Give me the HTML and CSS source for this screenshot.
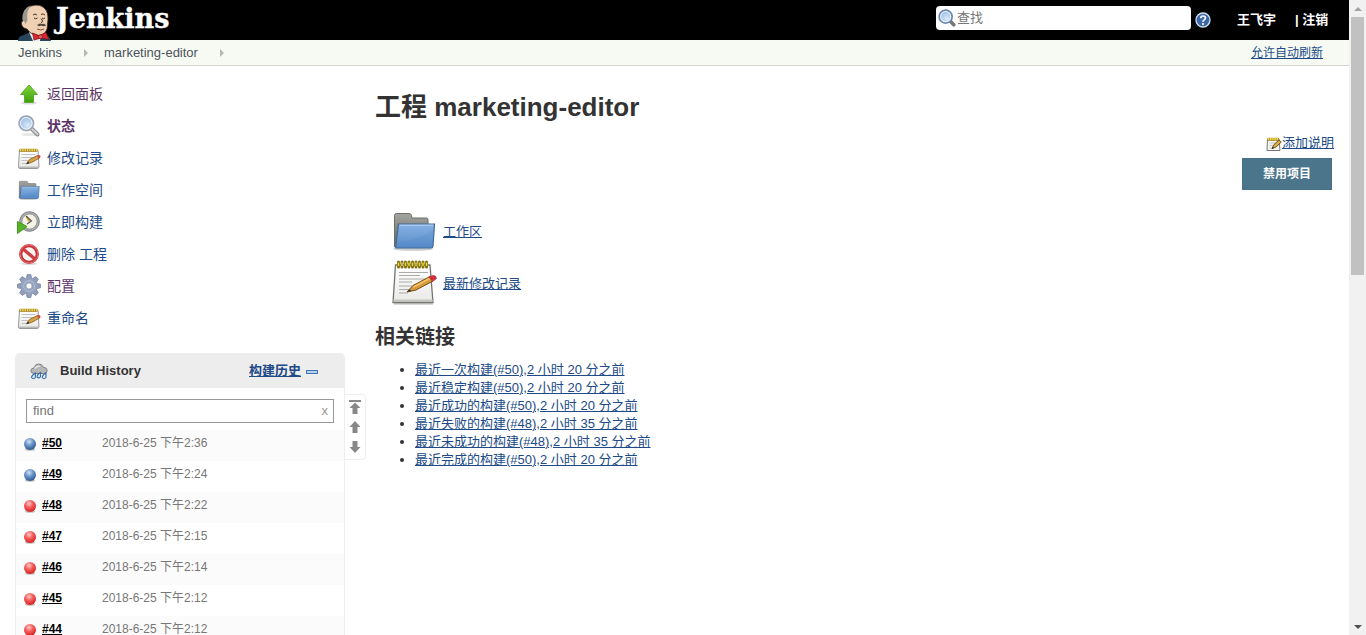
FILE: index.html
```
<!DOCTYPE html>
<html lang="zh-CN">
<head>
<meta charset="utf-8">
<title>marketing-editor [Jenkins]</title>
<link rel="stylesheet" href="styles.css">
</head>
<body>
<svg class="defs" aria-hidden="true">
  <defs>
    <linearGradient id="blue" x1="0" y1="0" x2="0" y2="1"><stop offset="0" stop-color="#87b2e2"/><stop offset="1" stop-color="#598cc9"/></linearGradient>
    <linearGradient id="gray" x1="0" y1="0" x2="0" y2="1"><stop offset="0" stop-color="#a4a4a0"/><stop offset="1" stop-color="#62625f"/></linearGradient>
    <linearGradient id="paper" x1="0" y1="0" x2="0" y2="1"><stop offset="0" stop-color="#fff"/><stop offset="1" stop-color="#e9e9e7"/></linearGradient>
    <linearGradient id="green" x1="0" y1="0" x2="0" y2="1"><stop offset="0" stop-color="#7fd63c"/><stop offset="1" stop-color="#3e9f0b"/></linearGradient>
    <radialGradient id="ballBlue" cx=".42" cy=".3" r=".7"><stop offset="0" stop-color="#d3e3f5"/><stop offset=".45" stop-color="#6f9acb"/><stop offset="1" stop-color="#2d578f"/></radialGradient>
    <radialGradient id="ballRed" cx=".42" cy=".3" r=".7"><stop offset="0" stop-color="#ffc9c9"/><stop offset=".45" stop-color="#f56060"/><stop offset="1" stop-color="#d82020"/></radialGradient>
    <radialGradient id="lens" cx=".6" cy=".65" r=".7"><stop offset="0" stop-color="#dcebfb"/><stop offset="1" stop-color="#8db4e2"/></radialGradient>
  </defs>
  <symbol id="up" viewBox="0 0 24 24">
    <ellipse cx="12" cy="21" rx="8" ry="1.6" fill="#ddd"/>
    <path d="M12 3 20.500 12.500H16.500V20.500H7.500V12.500H3.500Z" fill="url(#green)" stroke="#5cab30"/>
  </symbol>
  <symbol id="search" viewBox="0 0 24 24">
    <ellipse cx="13" cy="20.500" rx="9" ry="1.600" fill="#e8e8e8"/>
    <path d="M14.500 14.500 20.500 20.500" stroke="#888" stroke-width="4" stroke-linecap="round"/>
    <path d="M15 15 20.500 20.300" stroke="#d4d4d4" stroke-width="2" stroke-linecap="round"/>
    <circle cx="9.300" cy="9.300" r="7.200" fill="url(#lens)" stroke="#9ca5b2" stroke-width="1.800"/>
    <circle cx="9.300" cy="9.300" r="5.800" fill="none" stroke="#f3f8fe" stroke-width="1"/>
  </symbol>
  <symbol id="search-small" viewBox="0 0 16 16">
    <path d="M10.500 10.500 14 14" stroke="#777" stroke-width="3.200" stroke-linecap="round"/>
    <circle cx="6.800" cy="6.800" r="5.800" fill="url(#lens)" stroke="#6d87ab" stroke-width="1.500"/>
    <circle cx="6.800" cy="6.800" r="4.500" fill="none" stroke="#e8f2fd" stroke-width=".9"/>
  </symbol>
  <symbol id="notepad" viewBox="0 0 48 48">
    <path d="M4 44.500H43" stroke="#ccc" stroke-width="2.500"/>
    <path d="M5.500 6H40L43 43.500H3Z" fill="url(#paper)" stroke="#73736f" stroke-width="1.300"/>
    <path d="M3.500 40.500H42.500V43H3.500Z" fill="#c4c4c1"/>
    <path d="M9 13.500H38M9 16.500H30M9 20H37M9 23H22M9 27H23M9 30.500H20M9 34H18" stroke="#aaa" stroke-width="1"/>
    <path d="M8.500 3V8M12 3V8M15.500 3V8M19 3V8M22.500 3V8M26 3V8M29.500 3V8M33 3V8M36.500 3V8" stroke="#80700e" stroke-width="3" stroke-linecap="round"/>
    <path d="M8.500 3.500V7M12 3.500V7M15.500 3.500V7M19 3.500V7M22.500 3.500V7M26 3.500V7M29.500 3.500V7M33 3.500V7M36.500 3.500V7" stroke="#ead239" stroke-width="1.500"/>
    <path d="M17 33 23 26.500 40 17.500 43 22 26 31Z" fill="#d59a39" stroke="#7c4c14" stroke-width="1"/>
    <path d="M23.500 28 40.500 19" stroke="#f2c46c" stroke-width="1.500"/>
    <path d="M39 18 42.500 16.500Q46 16 46.500 19.500L42.500 22.500Z" fill="#d62f3b" stroke="#a62129" stroke-width=".6"/>
    <path d="M17 33 19.500 30.300 21.500 32Z" fill="#333"/>
  </symbol>
  <symbol id="notepad-small" viewBox="0 0 24 24">
    <path d="M2.500 4H21L22 20.500Q22 22.500 20 22.500H3Q1.300 22.500 1.500 20.500Z" fill="url(#paper)" stroke="#8b8b88" stroke-width=".9"/>
    <path d="M2 20.500H21.500V22H2Z" fill="#b9b9b6"/>
    <path d="M4.500 8.500H18.500M4.500 11.500H16M4.500 14.500H11M4.500 17.500H9" stroke="#bbb" stroke-width=".9"/>
    <path d="M2.500 4.300H20.500" stroke="#a5851c" stroke-width="3"/>
    <path d="M3 4H20.500" stroke="#f1d75c" stroke-width="2" stroke-dasharray="1.300 1"/>
    <path d="M9.500 17.800 12.500 13.500 20.500 9.500 22.500 12 14.500 16.500Z" fill="#d9a246" stroke="#83551b" stroke-width=".8"/>
    <path d="M20 9.800 22 9Q24 9.500 23.500 11.300L22 12.500Z" fill="#d4434a"/>
    <path d="M9 18.300 11 15.300 12.500 17Z" fill="#333"/>
  </symbol>
  <symbol id="notepad-mini" viewBox="0 0 16 16">
    <path d="M1.500 3H13L14 14.500H1Z" fill="#f6f6f3" stroke="#777"/>
    <path d="M3.500 7H10M3.500 9.500H8M3.500 12H6" stroke="#bbb" stroke-width=".8"/>
    <path d="M1.500 3.300H13" stroke="#a2831b" stroke-width="3"/>
    <path d="M1.800 3H13" stroke="#f3dc4f" stroke-width="2" stroke-dasharray="1.500 .7"/>
    <path d="M6 12.500 8 8.500 13 4 15.300 6 10 11Z" fill="#dcaa44" stroke="#684816" stroke-width=".9"/>
    <path d="M5.600 13 6.600 10.700 8 12Z" fill="#222"/>
  </symbol>
  <symbol id="folder" viewBox="0 0 48 48">
    <ellipse cx="23" cy="42" rx="20" ry="1.800" fill="#ccc"/>
    <path d="M4.500 40V8.500Q4.500 6.500 6.500 6.500H19Q21 6.500 21.500 8.500L22 11H36.500Q38 11 38 13V40Z" fill="url(#gray)" stroke="#6d6d6a"/>
    <path d="M8.500 17H44.500L43 39Q42.800 41 41 41H6.500Q5.500 41 5.800 39Z" fill="url(#blue)" stroke="#3f6899" stroke-width="1.200"/>
    <path d="M9.500 18.200H43.300" stroke="#b5d1ef"/>
    <path d="M8 35Q28 33 43 23L42 40H6.500Z" fill="#3e78bd" opacity=".15"/>
  </symbol>
  <symbol id="clock" viewBox="0 0 24 24">
    <circle cx="12.500" cy="11.500" r="9.800" fill="#abaeb0" stroke="#7b7e80"/>
    <circle cx="12.500" cy="11.500" r="7.600" fill="#f5f3e6" stroke="#85888a" stroke-width=".8"/>
    <path d="M12.500 11.500 9.500 6.500" stroke="#d3a62f" stroke-width="2"/>
    <path d="M9 6 14.500 11 10 14" fill="none" stroke="#555" stroke-width="1.100"/>
    <path d="M.5 11.500 10 16.500 .5 23.500Z" fill="#55b526" stroke="#449a1d"/>
  </symbol>
  <symbol id="stop" viewBox="0 0 24 24">
    <ellipse cx="12" cy="21.800" rx="8" ry="1.500" fill="#ddd"/>
    <circle cx="12" cy="12" r="8.300" fill="#f8f4f4" stroke="#c53336" stroke-width="3.200"/>
    <path d="M6 7 18 17" stroke="#cc3f42" stroke-width="3.400"/>
    <circle cx="12" cy="12" r="9" fill="none" stroke="#e9787a" stroke-width=".9"/>
  </symbol>
  <symbol id="gear" viewBox="0 0 24 24">
    <g fill="#8f9dba" stroke="#74819c" stroke-width=".7">
      <path id="tooth" d="M9 5.500 10.200.5H13.800L15 5.500Z"/>
      <use href="#tooth" transform="rotate(45 12 12)"/><use href="#tooth" transform="rotate(90 12 12)"/><use href="#tooth" transform="rotate(135 12 12)"/><use href="#tooth" transform="rotate(180 12 12)"/><use href="#tooth" transform="rotate(225 12 12)"/><use href="#tooth" transform="rotate(270 12 12)"/><use href="#tooth" transform="rotate(315 12 12)"/>
    </g>
    <circle cx="12" cy="12" r="5.700" fill="none" stroke="#95a3bf" stroke-width="5"/>
    <circle cx="12" cy="12" r="5.400" fill="none" stroke="#b4bfd4" stroke-width="1"/>
    <circle cx="12" cy="12" r="3.100" fill="#fff" stroke="#74819c" stroke-width=".7"/>
  </symbol>
  <symbol id="rain" viewBox="0 0 18 18">
    <path d="M4 10.500Q.5 10 .8 7.500 1.200 5 4 5 5 1 8.500 1 12 .8 13.200 4.200 17.200 4.500 17.200 7.700 17 10.500 14 10.500Z" fill="#b6b8b8" stroke="#7d8081"/>
    <path d="M4.500 5.500Q7 2.500 10 3.500" fill="none" stroke="#e3e4e4" stroke-width="1.300"/>
    <g fill="#d8e9fa" stroke="#396da6" stroke-width="1.100"><path d="M5.500 10Q1.500 12.500 1.500 14.500 3.500 17 5.300 14.500ZM10.500 9.500Q6.800 12 7 14 9 16 10.500 13.500ZM16 10Q12 12.500 12.200 14.500 14 17 16 14.500Z"/></g>
  </symbol>
  <symbol id="ball-blue" viewBox="0 0 14 14"><ellipse cx="7" cy="12.500" rx="5" ry="1.200" fill="#bbb"/><circle cx="7" cy="7" r="6" fill="url(#ballBlue)"/></symbol>
  <symbol id="ball-red" viewBox="0 0 14 14"><ellipse cx="7" cy="12.500" rx="5" ry="1.200" fill="#bbb"/><circle cx="7" cy="7" r="6" fill="url(#ballRed)"/></symbol>
  <symbol id="arrow-up" viewBox="0 0 12 12"><path d="M6 0 11.500 6H8.500V12H3.500V6H.5Z"/></symbol>
</svg>

<div class="window">
  <div class="page">
    <header class="top">
      <a class="logo">
        <svg class="butler" viewBox="0 0 34 37">
          <path d="M0 37Q0 32 6 31L12 28 25 31Q32 31 33 37Z" fill="#27455c"/>
          <path d="M11 28 23 30 22 37H15Z" fill="#eee"/>
          <path d="M5 17Q3 5 13 2 23-1 28 6 31 11 29.500 20 30 30 21 32 13 31 9 25 4 24 3.500 20 3 17 5 17Z" fill="#efd0b2" stroke="#382b24" stroke-width=".8"/>
          <path d="M4.500 16Q4 4 13 1.500 8 7 9.500 16L7.500 20 6 17Z" fill="#9a9790"/>
          <path d="M15 11Q17 9 19 11M23 10.500Q25 9 27 11M16 14Q17.500 15.500 19.500 14M24 14Q25.500 15.500 27 14M23 14.500Q26 18 23 18.500" fill="none" stroke="#483327"/>
          <path d="M19 21Q22 18.500 24 20 27 19 28 21.500 25 23 23 21.500 21 23 19 21Z" fill="#57483e"/>
          <path d="M19 25Q23 27 26 25" fill="none" stroke="#8d4a3d"/>
          <path d="M14.500 29 21 31.500 28 28.500 31 35.500 23 34 16 36Z" fill="#d9272f" stroke="#6e1116" stroke-width=".7"/>
          <circle cx="22.500" cy="32.800" r="2" fill="#ef5658" stroke="#6e1116" stroke-width=".6"/>
        </svg>
        <span class="wordmark">Jenkins</span>
      </a>
      <div class="searchbox"><svg class="i18"><use href="#search-small"/></svg><span>查找</span></div>
      <svg class="help" viewBox="0 0 16 16"><circle cx="8" cy="8" r="7" fill="#3a68a8" stroke="#d5e0ee" stroke-width="1.300"/><path d="M5.700 6.300Q5.800 4 8 4 10.400 4 10.400 6 10.400 7.100 9.100 7.900 8 8.500 8 9.800" fill="none" stroke="#fff" stroke-width="1.700"/><circle cx="8" cy="12" r="1.100" fill="#fff"/></svg>
      <a class="user">王飞宇</a>
      <span class="logout">| 注销</span>
    </header>

    <nav class="crumbs">
      <a class="crumb-root">Jenkins</a><i class="sep"></i><a class="crumb-job">marketing-editor</a><i class="sep"></i>
      <a class="refresh">允许自动刷新</a>
    </nav>

    <div class="body">
      <aside class="side">
        <ul class="tasks">
          <li><svg><use href="#up"/></svg><a class="visited">返回面板</a></li>
          <li><svg><use href="#search"/></svg><a class="visited current">状态</a></li>
          <li><svg><use href="#notepad-small"/></svg><a>修改记录</a></li>
          <li><svg><use href="#folder"/></svg><a>工作空间</a></li>
          <li><svg><use href="#clock"/></svg><a>立即构建</a></li>
          <li><svg><use href="#stop"/></svg><a>删除 工程</a></li>
          <li><svg><use href="#gear"/></svg><a class="visited">配置</a></li>
          <li><svg><use href="#notepad-small"/></svg><a>重命名</a></li>
        </ul>
        <div class="history-wrap">
          <section class="history">
            <div class="history-head">
              <svg class="i18"><use href="#rain"/></svg><strong>Build History</strong>
              <a class="trend">构建历史</a><i class="collapse"></i>
            </div>
            <div class="find"><span>find</span><span class="clear">x</span></div>
            <div class="build"><svg><use href="#ball-blue"/></svg><a>#50</a><span>2018-6-25 下午2:36</span></div>
            <div class="build"><svg><use href="#ball-blue"/></svg><a>#49</a><span>2018-6-25 下午2:24</span></div>
            <div class="build"><svg><use href="#ball-red"/></svg><a>#48</a><span>2018-6-25 下午2:22</span></div>
            <div class="build"><svg><use href="#ball-red"/></svg><a>#47</a><span>2018-6-25 下午2:15</span></div>
            <div class="build"><svg><use href="#ball-red"/></svg><a>#46</a><span>2018-6-25 下午2:14</span></div>
            <div class="build"><svg><use href="#ball-red"/></svg><a>#45</a><span>2018-6-25 下午2:12</span></div>
            <div class="build"><svg><use href="#ball-red"/></svg><a>#44</a><span>2018-6-25 下午2:12</span></div>
          </section>
          <div class="pager">
            <svg class="first" viewBox="0 0 12 14"><path d="M0 0H12V2H0ZM6 2.500 11.500 8H8.500V14H3.500V8H.5Z"/></svg>
            <svg><use href="#arrow-up"/></svg>
            <svg class="down"><use href="#arrow-up"/></svg>
          </div>
        </div>
      </aside>

      <main class="main">
        <h1>工程 marketing-editor</h1>
        <div class="describe"><svg><use href="#notepad-mini"/></svg><a>添加说明</a></div>
        <div class="actions"><span class="button">禁用项目</span></div>
        <div class="feature"><svg><use href="#folder"/></svg><a>工作区</a></div>
        <div class="feature"><svg><use href="#notepad"/></svg><a>最新修改记录</a></div>
        <h2>相关链接</h2>
        <ul class="links">
          <li><a>最近一次构建(#50),2 小时 20 分之前</a></li>
          <li><a>最近稳定构建(#50),2 小时 20 分之前</a></li>
          <li><a>最近成功的构建(#50),2 小时 20 分之前</a></li>
          <li><a>最近失败的构建(#48),2 小时 35 分之前</a></li>
          <li><a>最近未成功的构建(#48),2 小时 35 分之前</a></li>
          <li><a>最近完成的构建(#50),2 小时 20 分之前</a></li>
        </ul>
      </main>
    </div>
  </div>
  <div class="scrollbar"><i class="tri tri-up"></i><div class="thumb"></div><i class="tri tri-down"></i></div>
</div>
</body>
</html>
```
FILE: styles.css
```
* { box-sizing: border-box; }
body {
  margin: 0;
  background: #fff;
  color: #333;
  font: 13px/18px "Liberation Sans", "Noto Sans CJK SC", sans-serif;
  overflow: hidden;
}
ul { list-style: none; margin: 0; padding: 0; }
svg { display: block; flex: none; }
a { color: #204a87; white-space: nowrap; }
.defs { position: absolute; width: 0; height: 0; }
.window { display: flex; height: 635px; overflow: hidden; }
.page { width: 1349px; height: 635px; overflow: hidden; }
.i18 { width: 18px; height: 18px; }

.top { display: flex; height: 40px; background: #000; color: #fff; font-weight: bold; }
.logo { display: flex; width: 936px; padding-left: 18px; }
.butler { width: 34px; height: 37px; margin-top: 4px; }
.wordmark {
  margin: 3px 0 0 4px;
  color: #fff;
  font: bold 27px/32px "DejaVu Serif", serif;
  -webkit-text-stroke: .4px #fff;
}
.searchbox {
  display: flex;
  width: 255px;
  height: 24px;
  margin-top: 6px;
  padding: 3px 2px;
  gap: 1px;
  border-radius: 4px;
  background: #fff;
  color: #757575;
  font-weight: normal;
}
.help { width: 16px; height: 16px; margin: 12px 0 0 4px; }
.user { margin: 11px 0 0 26px; color: #fff; }
.logout { margin: 11px 0 0 19px; white-space: nowrap; }

.crumbs {
  display: flex;
  align-items: center;
  height: 26px;
  padding: 0 26px 0 18px;
  border-bottom: 1px solid #d3d7cf;
  background: #f6faf2;
}
.crumbs a { color: #4d545d; }
.crumb-root { width: 66px; }
.crumb-job { width: 116px; }
.sep { width: 0; height: 0; border: 4px solid transparent; border-left-color: #b5b8b2; border-right: 0; }
.crumb-root + .sep { margin-right: 16px; }
.crumbs .refresh { margin-left: auto; color: #204a87; font-size: 12px; text-decoration: underline; }

.body { display: flex; }
.side { width: 375px; padding: 12px 0 0 15px; }
.tasks li { display: flex; align-items: center; height: 32px; padding-left: 2px; gap: 6px; font-size: 14px; }
.tasks svg { width: 24px; height: 24px; }
.tasks .visited { color: #5c3566; }
.tasks .current { font-weight: bold; }

.history-wrap { display: flex; margin-top: 19px; }
.history { width: 330px; height: 300px; border: 1px solid #eee; border-radius: 5px 5px 0 0; }
.history-head {
  display: flex;
  align-items: center;
  height: 35px;
  margin: -1px -1px 0;
  padding: 0 27px 0 15px;
  border-radius: 5px 5px 0 0;
  background: #ededed;
}
.history-head .i18 { margin-top: 3px; }
.history-head strong { margin-left: 12px; }
.trend { margin-left: auto; font-weight: bold; text-decoration: underline; }
.collapse { width: 12px; height: 4px; margin: 3px 0 0 5px; border: 1px solid #4475b3; background: #b4d0ee; }
.find {
  display: flex;
  justify-content: space-between;
  height: 24px;
  margin: 11px 10px 7px;
  padding: 2px 5px 0 6px;
  border: 1px solid #999;
  color: #757575;
}
.clear { color: #999; }
.build { display: flex; height: 31px; padding: 4px 0 0 7px; color: #777; font-size: 12px; }
.build:nth-of-type(odd) { background: #fbfbfb; }
.build svg { width: 14px; height: 14px; margin-top: 3px; }
.build a { width: 60px; margin-left: 5px; color: #000; font-weight: bold; text-decoration: underline; }
.pager {
  display: flex;
  flex-direction: column;
  align-items: center;
  gap: 8px;
  width: 21px;
  height: 66px;
  margin-top: 41px;
  padding-top: 5px;
  border: 1px solid #eee;
  border-left: 0;
  border-radius: 0 4px 4px 0;
}
.pager svg { width: 12px; height: 12px; fill: #888; }
.pager .first { height: 14px; margin-bottom: -1px; }
.pager .down { transform: rotate(180deg); }

.main { width: 974px; padding: 25px 15px 0 0; }
h1 { margin: 0; font-size: 26px; line-height: 32px; }
.describe { display: flex; justify-content: flex-end; align-items: center; height: 18px; margin-top: 11px; }
.describe svg { width: 16px; height: 16px; margin-top: 2px; }
.describe a, .feature a, .links a { text-decoration: underline; }
.actions { display: flex; justify-content: flex-end; margin: 6px 2px 15px 0; }
.button {
  width: 90px;
  height: 32px;
  border: 1px solid #44708a;
  background: #4b758b;
  color: #fff;
  font-size: 12px;
  font-weight: bold;
  line-height: 30px;
  text-align: center;
}
.feature { display: flex; align-items: center; height: 52px; padding-left: 15px; gap: 5px; }
.feature svg { width: 48px; height: 48px; }
.feature a { margin-top: 2px; }
h2 { margin: 16px 0 12px; font-size: 20px; line-height: 24px; }
.links { padding-left: 40px; list-style: disc; }

.scrollbar {
  display: flex;
  flex-direction: column;
  align-items: center;
  width: 17px;
  height: 635px;
  background: #f1f1f1;
}
.thumb { width: 13px; height: 258px; background: #c1c1c1; }
.tri { width: 0; height: 0; border: 4px solid transparent; }
.tri-up { margin: 7px 0 6px; border-top: 0; border-bottom-color: #a3a3a3; }
.tri-down { margin: auto 0 6px; border-bottom: 0; border-top-color: #505050; }
```
